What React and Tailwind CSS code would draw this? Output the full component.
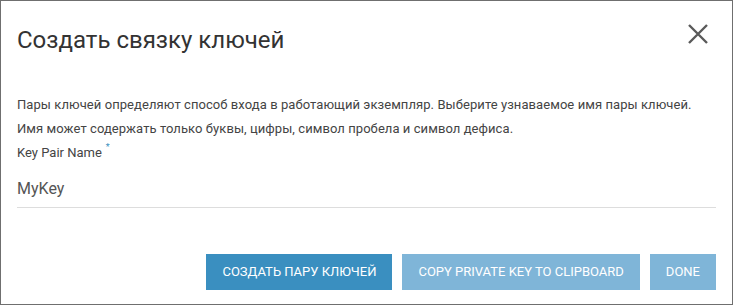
export default function App() {
  return (
    <div className="w-[733px] h-[305px] bg-[#6f6f6f] p-px" style={{ fontFamily: 'Roboto, "Noto Sans", sans-serif' }}>
      <div className="w-full h-full bg-white flex flex-col">
        <div className="flex items-start justify-between pl-4 pr-6 pt-[25px]">
          <h1 className="text-[24px] leading-[28px] text-[#333]">Создать связку ключей</h1>
          <button className="mt-[-2px] text-[#5a5a5a]">
            <svg width="20" height="20" viewBox="0 0 20 20" fill="none" stroke="currentColor" strokeWidth="2.4">
              <path d="M1 1L19 19M19 1L1 19" />
            </svg>
          </button>
        </div>
        <div className="px-4 pt-[39px] text-[13px] text-[#444] tracking-[0.07px]">
          <p className="leading-[24px]">Пары ключей определяют способ входа в работающий экземпляр. Выберите узнаваемое имя пары ключей.</p>
          <p className="leading-[24px]">Имя может содержать только буквы, цифры, символ пробела и символ дефиса.</p>
          <label className="block leading-[24px] text-[#444] tracking-normal">
            Key Pair Name<span className="relative top-[-7px] text-[#3a8fc0] ml-[4px] text-[9px]">*</span>
          </label>
          <div className="mt-[13px] pb-[8px] border-b border-[#ddd] text-[16px] leading-[20px] text-[#555] tracking-normal">MyKey</div>
        </div>
        <div className="flex justify-end gap-[10px] px-4 mt-[46px]">
          <button className="h-[36px] px-[16px] bg-[#3a8fc0] text-white text-[13px] uppercase">Создать пару ключей</button>
          <button className="h-[36px] px-[16px] bg-[#7fb5d8] text-white text-[13px] uppercase">Copy private key to clipboard</button>
          <button className="h-[36px] px-[16px] bg-[#7fb5d8] text-white text-[13px] uppercase">Done</button>
        </div>
      </div>
    </div>
  );
}
